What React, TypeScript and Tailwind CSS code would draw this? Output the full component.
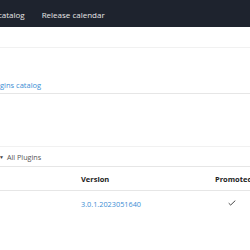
export default function App() {
  const font = { fontFamily: '"Open Sans", "Noto Sans", sans-serif' };
  return (
    <div className="w-[250px] h-[250px] overflow-hidden bg-white" style={font}>
      <div className="h-[27px] bg-[#1e232e] flex items-center pt-[2px] text-[8px] text-[#e6e6e6]">
        <div className="flex items-center gap-[17px] ml-[-31px] whitespace-nowrap">
          <span>Plugins catalog</span>
          <span>Release calendar</span>
        </div>
      </div>
      <div className="h-[20px]" />
      <div className="border-t border-[#f1f1f1] h-[46px] flex items-end pb-[2px]">
        <a className="text-[7.5px] text-[#3b8ed4] ml-[-11px] whitespace-nowrap">Plugins catalog</a>
      </div>
      <div className="border-t border-[#e6e6e6] h-[53px]" />
      <div className="border-t border-[#f1f1f1] h-[20px] flex items-center pt-[2px] gap-[3px] text-[7.2px] text-[#555]">
        <span className="ml-[-1px] text-[5px] text-[#444]">▼</span>
        <span>All Plugins</span>
      </div>
      <div className="border-t border-[#e6e6e6] h-[24px] grid grid-cols-[81px_134px_1fr] items-center pt-[2px] text-[7.5px] font-bold text-[#222] whitespace-nowrap">
        <span />
        <span>Version</span>
        <span>Promoted</span>
      </div>
      <div className="border-t border-[#e6e6e6] h-[26px] grid grid-cols-[81px_147px_1fr] items-center pt-[1px] text-[7.3px] whitespace-nowrap">
        <span />
        <a className="text-[#3b8ed4]">3.0.1.2023051640</a>
        <svg width="8" height="6" viewBox="0 0 8 6" className="mt-[-2px]">
          <path d="M0.7 3.2 L2.7 5 L7.3 0.6" stroke="#333" strokeWidth="0.9" fill="none" />
        </svg>
      </div>
    </div>
  );
}
